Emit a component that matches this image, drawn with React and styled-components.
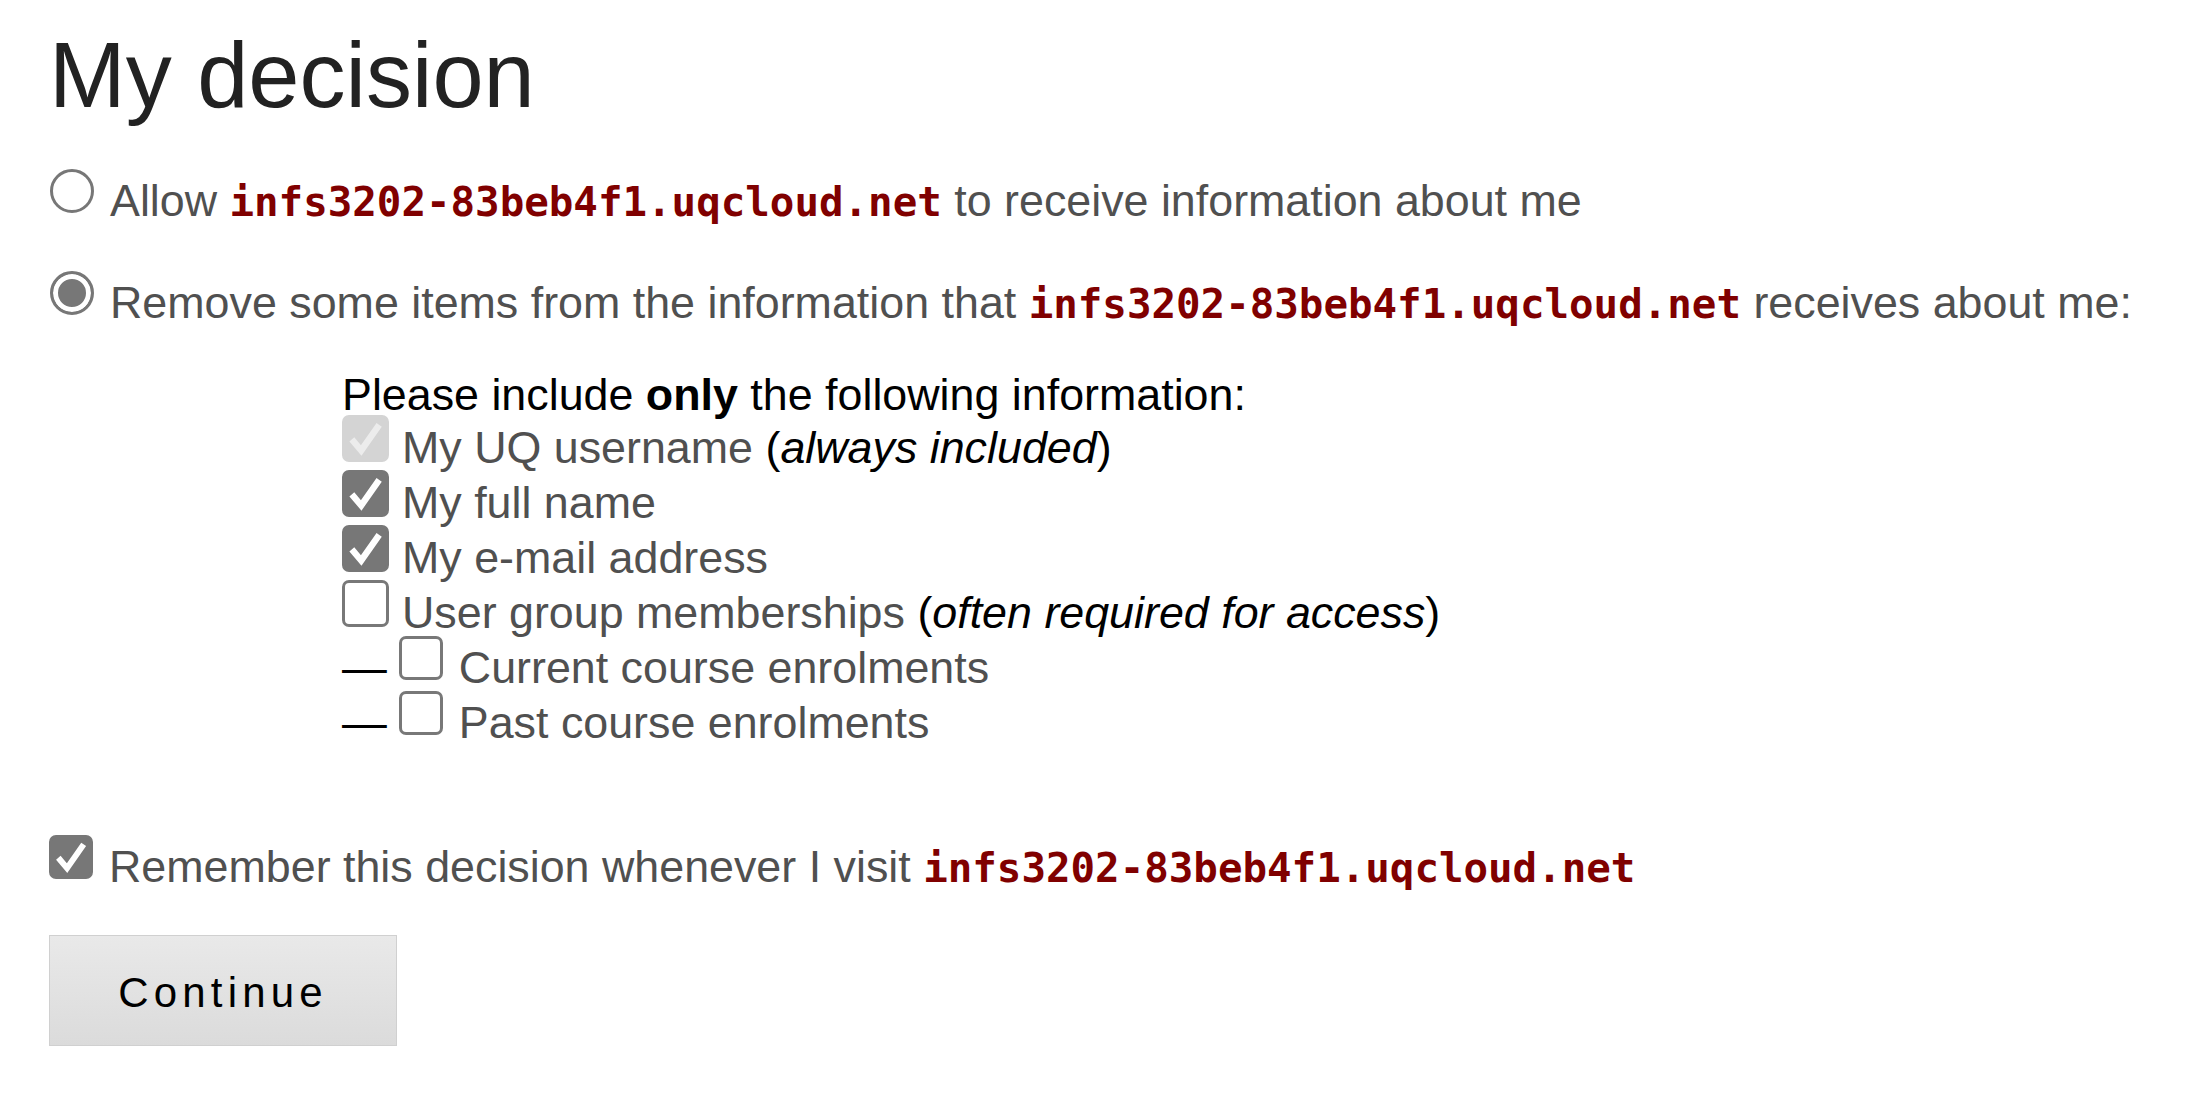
import styled, { createGlobalStyle } from 'styled-components';

const GlobalStyle = createGlobalStyle`
  html, body {
    margin: 0;
    padding: 0;
    background: #fff;
  }
  body {
    font-family: "Liberation Sans", Arial, sans-serif;
  }
`;

const DOMAIN = 'infs3202-83beb4f1.uqcloud.net';

function Tick({ color }) {
  return (
    <svg viewBox="0 0 48 48" width="100%" height="100%" style={{ display: 'block' }}>
      <path
        d="M8 25 L19 38 L40 8"
        fill="none"
        stroke={color}
        strokeWidth="7.5"
        strokeLinejoin="miter"
      />
    </svg>
  );
}

function Checkbox({ state = 'off', size = 47, gap = 13 }) {
  return (
    <Box $state={state} $size={size} $gap={gap}>
      {state === 'on' && <Tick color="#fff" />}
      {state === 'locked' && <Tick color="#ececec" />}
    </Box>
  );
}

function App() {
  return (
    <>
      <GlobalStyle />
      <Page>
        <Title>My decision</Title>

        <Choice $gap={48}>
          <Radio />
          Allow <Domain>{DOMAIN}</Domain> to receive information about me
        </Choice>

        <Choice $gap={47}>
          <Radio $checked />
          Remove some items from the information that <Domain>{DOMAIN}</Domain> receives about me:
        </Choice>

        <Items>
          <Intro>
            Please include <strong>only</strong> the following information:
          </Intro>
          <Item>
            <Checkbox state="locked" />
            My UQ username <Note>(<em>always included</em>)</Note>
          </Item>
          <Item>
            <Checkbox state="on" />
            My full name
          </Item>
          <Item>
            <Checkbox state="on" />
            My e-mail address
          </Item>
          <Item>
            <Checkbox />
            User group memberships <Note>(<em>often required for access</em>)</Note>
          </Item>
          <Item>
            <Dash>—</Dash>
            <Checkbox size={44} gap={16} />
            Current course enrolments
          </Item>
          <Item>
            <Dash>—</Dash>
            <Checkbox size={44} gap={16} />
            Past course enrolments
          </Item>
        </Items>

        <Choice $gap={89}>
          <Checkbox state="on" size={44} gap={16} />
          Remember this decision whenever I visit <Domain>{DOMAIN}</Domain>
        </Choice>

        <ContinueButton type="button">Continue</ContinueButton>
      </Page>
    </>
  );
}

export default App;

const Page = styled.div`
  padding: 25px 0 40px 49px;
  color: #505050;
  font-size: 44.8px;
`;

const Title = styled.h1`
  margin: 0;
  font-size: 92px;
  line-height: 100px;
  font-weight: 400;
  color: #222;
`;

const Choice = styled.div`
  margin-top: ${(p) => p.$gap}px;
  line-height: 55px;
  white-space: nowrap;
`;

const Radio = styled.span`
  display: inline-block;
  box-sizing: border-box;
  width: 44px;
  height: 44px;
  margin: -20px 16px 3px 1px;
  vertical-align: baseline;
  border: 3px solid #777;
  border-radius: 50%;
  background: ${(p) => (p.$checked ? '#777' : '#fff')};
  box-shadow: ${(p) => (p.$checked ? 'inset 0 0 0 5px #fff' : 'none')};
`;

const Domain = styled.code`
  font-family: "DejaVu Sans Mono", "Liberation Mono", monospace;
  font-weight: 700;
  font-size: 40.8px;
  line-height: 1;
  color: #800000;
`;

const Items = styled.div`
  margin: 38px 0 0 293px;
  white-space: nowrap;
`;

const Intro = styled.div`
  line-height: 52px;
  color: #000;

  strong {
    font-weight: 700;
  }
`;

const Item = styled.div`
  line-height: 55px;
`;

const Note = styled.span`
  color: #000;

  em {
    font-style: italic;
  }
`;

const Dash = styled.span`
  color: #000;
  margin-right: 12px;
`;

const Box = styled.span`
  display: inline-block;
  box-sizing: border-box;
  width: ${(p) => p.$size}px;
  height: ${(p) => p.$size}px;
  margin: -20px ${(p) => p.$gap}px ${(p) => (p.$size > 45 ? 1 : 3)}px 0;
  vertical-align: baseline;
  border-radius: 7px;
  border: 3px solid
    ${(p) => (p.$state === 'on' ? '#777' : p.$state === 'locked' ? '#d4d4d4' : '#787878')};
  background: ${(p) => (p.$state === 'on' ? '#777' : p.$state === 'locked' ? '#d4d4d4' : '#fff')};
  overflow: hidden;
`;

const ContinueButton = styled.button`
  display: block;
  box-sizing: border-box;
  width: 348px;
  height: 111px;
  margin-top: 41px;
  padding: 4px 0 0;
  border: 1px solid #d0d0d0;
  border-radius: 0;
  background: linear-gradient(#e9e9e9, #dbdbdb);
  font-family: "Liberation Sans", Arial, sans-serif;
  font-size: 42px;
  line-height: 105px;
  letter-spacing: 5.2px;
  color: #000;
  text-align: center;
  cursor: pointer;
`;
